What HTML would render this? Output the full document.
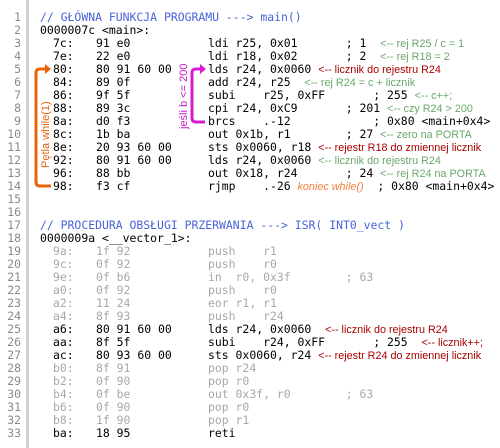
<!DOCTYPE html>
<html><head><meta charset="utf-8"><style>
body{margin:0;width:500px;height:448px;background:#fff;overflow:hidden;position:relative;font-family:"DejaVu Sans Mono",monospace;font-size:11.45px;}
.ln{position:absolute;left:0;width:21px;text-align:right;color:#8a8a8a;}
.l{position:absolute;left:0;height:13px;line-height:13px;white-space:pre;}
.a{position:absolute;left:53px}
.h{position:absolute;left:96px}
.i{position:absolute;left:208px}
.bl{color:#4a64d8}
.g{color:#a8a8a8}
.an{font-family:"Liberation Sans",sans-serif;font-size:10.8px}
.gr{color:#6aa86a}.rd{color:#a80000}.or{color:#f08040;font-style:italic}
#bar{position:absolute;left:26px;top:0;width:3px;height:448px;background:#d4d0c8}
</style></head><body>
<div id="bar"></div>
<div id="c"></div>
<script>
const L=[
['c','<span class="bl">// GŁÓWNA FUNKCJA PROGRAMU ---&gt; main()</span>'],
['c','0000007c &lt;main&gt;:'],
['7c:','91 e0','ldi r25, 0x01       ; 1  <span class="an gr">&lt;-- rej R25 / c = 1</span>'],
['7e:','22 e0','ldi r18, 0x02       ; 2  <span class="an gr">&lt;-- rej R18 = 2</span>'],
['80:','80 91 60 00','lds r24, 0x0060 <span class="an rd">&lt;-- licznik do rejestru R24</span>'],
['84:','89 0f','add r24, r25  <span class="an gr">&lt;-- rej R24 = c + licznik</span>'],
['86:','9f 5f','subi    r25, 0xFF       ; 255 <span class="an gr">&lt;-- c++;</span>'],
['88:','89 3c','cpi r24, 0xC9       ; 201 <span class="an gr">&lt;-- czy R24 &gt; 200</span>'],
['8a:','d0 f3','brcs    .-12            ; 0x80 &lt;main+0x4&gt;'],
['8c:','1b ba','out 0x1b, r1        ; 27 <span class="an gr">&lt;-- zero na PORTA</span>'],
['8e:','20 93 60 00','sts 0x0060, r18 <span class="an rd">&lt;-- rejestr R18 do zmiennej licznik</span>'],
['92:','80 91 60 00','lds r24, 0x0060 <span class="an gr">&lt;-- licznik do rejestru R24</span>'],
['96:','88 bb','out 0x18, r24       ; 24 <span class="an gr">&lt;-- rej R24 na PORTA</span>'],
['98:','f3 cf','rjmp    .-26 <span class="an or">koniec while()</span>  ; 0x80 &lt;main+0x4&gt;'],
null,null,
['c','<span class="bl">// PROCEDURA OBSŁUGI PRZERWANIA ---&gt; ISR( INT0_vect )</span>'],
['c','0000009a &lt;__vector_1&gt;:'],
['g9a:','1f 92','push    r1'],
['g9c:','0f 92','push    r0'],
['g9e:','0f b6','in  r0, 0x3f        ; 63'],
['ga0:','0f 92','push    r0'],
['ga2:','11 24','eor r1, r1'],
['ga4:','8f 93','push    r24'],
['a6:','80 91 60 00','lds r24, 0x0060  <span class="an rd">&lt;-- licznik do rejestru R24</span>'],
['aa:','8f 5f','subi    r24, 0xFF       ; 255  <span class="an rd">&lt;-- licznik++;</span>'],
['ac:','80 93 60 00','sts 0x0060, r24 <span class="an rd">&lt;-- rejestr R24 do zmiennej licznik</span>'],
['gb0:','8f 91','pop r24'],
['gb2:','0f 90','pop r0'],
['gb4:','0f be','out 0x3f, r0        ; 63'],
['gb6:','0f 90','pop r0'],
['gb8:','1f 90','pop r1'],
['ba:','18 95','reti']];
let h='';
for(let k=0;k<33;k++){const t=11+k*13;h+=`<div class="l ln" style="top:${t}px">${k+1}</div>`;const r=L[k];if(!r)continue;
if(r[0]=='c'){h+=`<div class="l" style="top:${t}px;left:40px">${r[1]}</div>`;continue;}
let g=r[0][0]=='g';let a=g?r[0].slice(1):r[0];
h+=`<div class="l${g?' g':''}" style="top:${t}px;width:500px"><span class="a">${a}</span><span class="h">${r[1]}</span><span class="i">${r[2]}</span></div>`;}
document.getElementById('c').innerHTML=h;
</script>
<svg style="position:absolute;left:0;top:0" width="500" height="448">
<path d="M48 69 H40 Q36 69 36 73 V182 Q36 186 40 186 H51" fill="none" stroke="#e8640a" stroke-width="3"/>
<path d="M45 64 L51 69 L45 74 Z" fill="#e8640a"/>
<path d="M203 69 H196 Q192 69 192 73 V118 Q192 122 196 122 H205" fill="none" stroke="#d81ad8" stroke-width="3"/>
<path d="M200 64 L206 69 L200 74 Z" fill="#d81ad8"/>
<text transform="translate(49,168) rotate(-90)" font-family="Liberation Sans" font-size="11" fill="#e8640a">Pętla while(1)</text>
<text transform="translate(187,129) rotate(-90)" font-family="Liberation Sans" font-size="11" fill="#c818c8">jeśli b &lt;= 200</text>
</svg>
</body></html>
